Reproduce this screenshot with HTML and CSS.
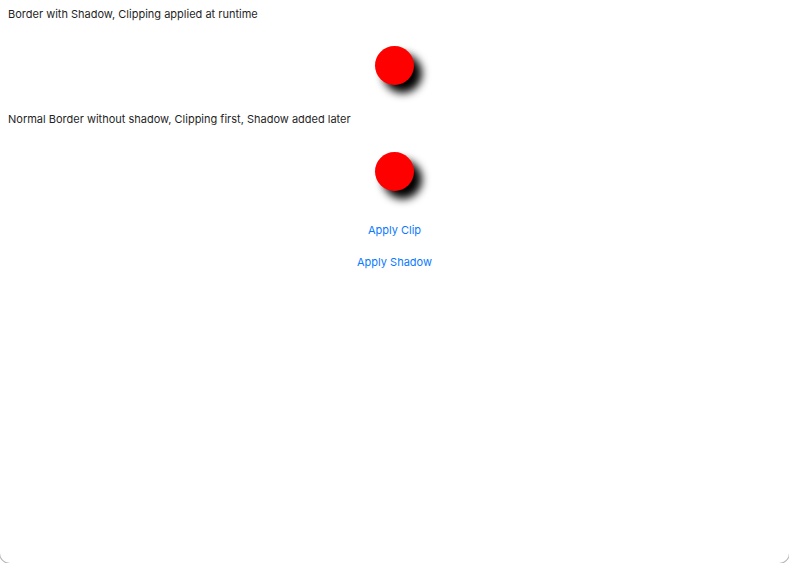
FILE: index.html
```html
<!DOCTYPE html>
<html>
<head>
<meta charset="utf-8">
<link rel="stylesheet" href="styles.css">
</head>
<body>
<div class="window">
  <div class="label">Border with Shadow, Clipping applied at runtime</div>
  <div class="stage first"><div class="dot"></div></div>
  <div class="label">Normal Border without shadow, Clipping first, Shadow added later</div>
  <div class="stage second"><div class="dot"></div></div>
  <div class="actions">
    <button class="link">Apply Clip</button>
    <button class="link">Apply Shadow</button>
  </div>
</div>
</body>
</html>
```
FILE: styles.css
```css
html, body {
  margin: 0;
  padding: 0;
  background: #fff;
}
.window {
  width: 789px;
  height: 563px;
  box-sizing: border-box;
  border-radius: 0 0 10px 10px;
  box-shadow: 0 0 0 1px #b8b8b8;
  overflow: hidden;
  font-family: Inter, "Liberation Sans", sans-serif;
  font-size: 11px;
  color: #1f1f1f;
  display: flex;
  flex-direction: column;
}
.label {
  padding: 6px 8px 0 8px;
  height: 16px;
  line-height: 16px;
}
.stage {
  display: flex;
  justify-content: center;
  box-sizing: content-box;
}
.stage.first {
  padding-top: 24px;
  height: 59px;
}
.stage.second {
  padding-top: 25px;
  height: 60px;
}
.dot {
  width: 39px;
  height: 39px;
  border-radius: 50%;
  background: #ff0000;
  box-shadow: 8px 8px 9px #000;
}
.actions {
  display: flex;
  flex-direction: column;
  align-items: center;
  gap: 16px;
  padding-top: 10px;
}
.link {
  border: none;
  background: none;
  padding: 0;
  font-family: Inter, "Liberation Sans", sans-serif;
  font-size: 11px;
  line-height: 16px;
  color: #0a7aff;
  cursor: pointer;
}
```
